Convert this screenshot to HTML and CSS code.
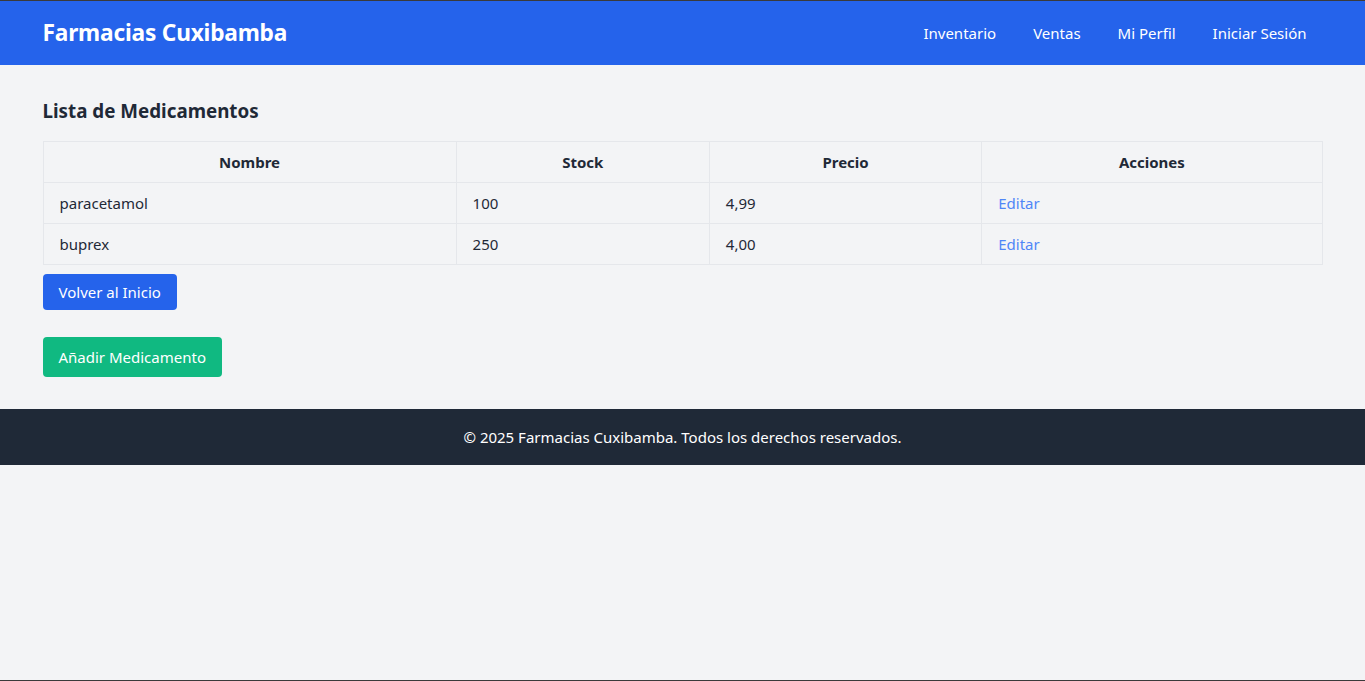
FILE: index.html
```html
<!DOCTYPE html>
<html lang="es">
<head>
<meta charset="utf-8">
<title>Farmacias Cuxibamba</title>
<link rel="stylesheet" href="styles.css">
</head>
<body>
<header class="topbar">
  <div class="container topbar-inner">
    <div class="brand">Farmacias Cuxibamba</div>
    <nav class="nav">
      <a href="#">Inventario</a>
      <a href="#">Ventas</a>
      <a href="#">Mi Perfil</a>
      <a href="#">Iniciar Sesión</a>
    </nav>
  </div>
</header>
<main class="container main">
  <h2 class="title">Lista de Medicamentos</h2>
  <table class="table">
    <thead>
      <tr>
        <th class="c-name">Nombre</th>
        <th class="c-stock">Stock</th>
        <th class="c-price">Precio</th>
        <th class="c-actions">Acciones</th>
      </tr>
    </thead>
    <tbody>
      <tr><td>paracetamol</td><td>100</td><td>4,99</td><td><a class="edit" href="#">Editar</a></td></tr>
      <tr><td>buprex</td><td>250</td><td>4,00</td><td><a class="edit" href="#">Editar</a></td></tr>
    </tbody>
  </table>
  <div class="actions">
    <a class="btn btn-blue" href="#">Volver al Inicio</a>
    <a class="btn btn-green" href="#">Añadir Medicamento</a>
  </div>
</main>
<footer class="footer">© 2025 Farmacias Cuxibamba. Todos los derechos reservados.</footer>
</body>
</html>
```
FILE: styles.css
```css
* { box-sizing: border-box; }
html, body { margin: 0; padding: 0; }
body {
  background: #f3f4f6;
  color: #1f2937;
  font-family: "Noto Sans", "Open Sans", sans-serif;
  font-size: 15px;
  line-height: 24px;
  min-height: 100vh;
  border-top: 1px solid #3a3a3a;
  border-bottom: 1px solid #3a3a3a;
}
a { text-decoration: none; }
.container { max-width: 1280px; margin: 0 auto; }
.topbar { background: #2563eb; color: #fff; }
.topbar-inner {
  height: 64px;
  display: flex;
  align-items: center;
  justify-content: space-between;
}
.brand { font-size: 22.7px; font-weight: 700; letter-spacing: -0.2px; }
.nav { display: flex; gap: 5px; }
.nav a { color: #fff; padding: 0 16px; font-size: 15px; }
.main { padding: 32px 0 32px; }
.title { margin: 0 0 16px; font-size: 18.8px; line-height: 28px; font-weight: 700; }
.table { width: 100%; border-collapse: collapse; }
.table th, .table td {
  border: 1px solid #e5e7eb;
  height: 41px;
  padding: 0 16px;
  font-size: 15px;
}
.table th { text-align: center; font-weight: 700; }
.table td { text-align: left; }
.c-name { width: 32.3%; }
.c-stock { width: 19.8%; }
.c-price { width: 21.3%; }
.c-actions { width: 26.6%; }
.edit { color: #4f86f7; }
.actions { display: flex; flex-direction: column; align-items: flex-start; gap: 27px; margin-top: 9px; }
.btn { color: #fff; border-radius: 4px; padding: 0 16px; font-size: 15px; display: inline-flex; align-items: center; }
.btn-blue { background: #2563eb; height: 36px; }
.btn-green { background: #10b981; height: 40px; }
.footer {
  background: #1f2937;
  color: #fff;
  height: 56px;
  display: flex;
  align-items: center;
  justify-content: center;
  font-size: 15px;
}
```
